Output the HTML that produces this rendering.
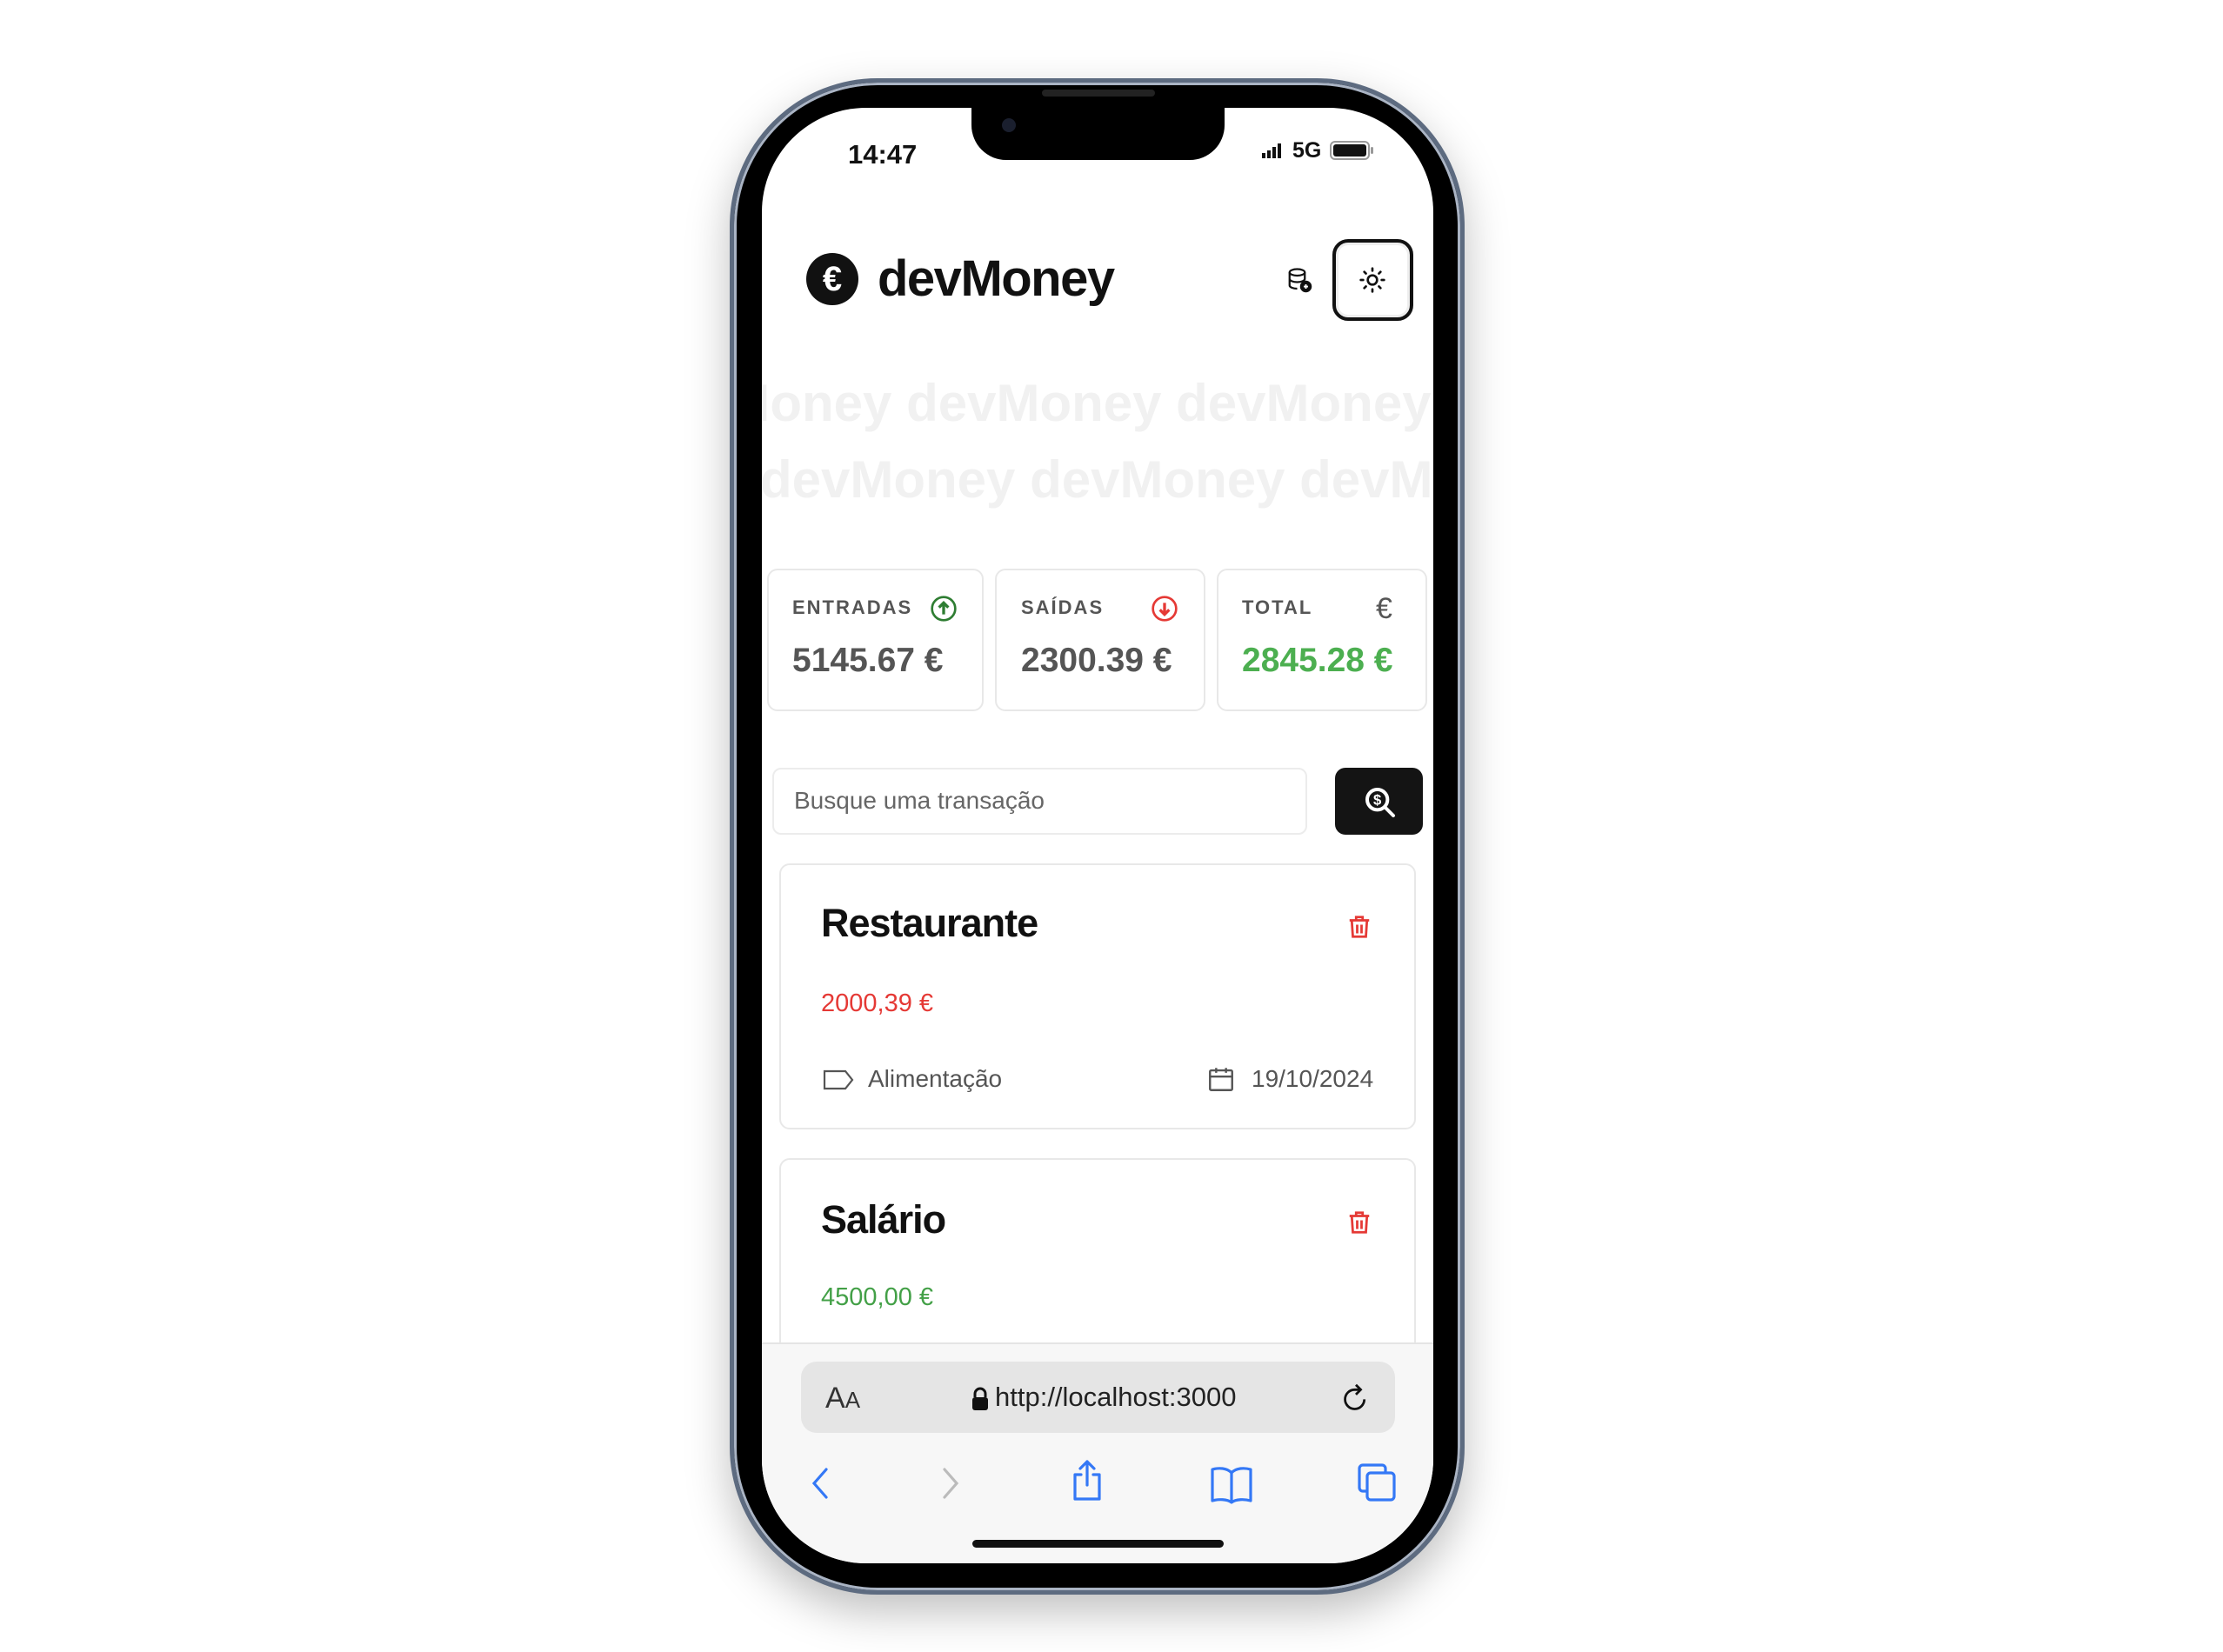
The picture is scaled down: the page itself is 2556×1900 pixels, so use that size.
<!DOCTYPE html>
<html><head><meta charset="utf-8"><style>
*{margin:0;padding:0;box-sizing:border-box}
body{width:2556px;height:1900px;background:#fff;position:relative;overflow:hidden;font-family:"Liberation Sans",sans-serif}
.a{position:absolute}
.phone{left:839px;top:90px;width:845px;height:1744px;border-radius:170px;background:#000;border:5px solid #5d6b80;box-shadow:0 20px 50px rgba(0,0,0,.25),inset 0 0 0 3px #aab4c4}
.screen{left:876px;top:124px;width:772px;height:1674px;border-radius:120px;background:#fff;overflow:hidden}
.notch{left:1117px;top:110px;width:291px;height:74px;background:#000;border-radius:0 0 40px 40px}
.wm{font-weight:bold;font-size:60px;color:#f1f1f1;white-space:nowrap;word-spacing:0px}
.card{border:2px solid #e8e8e8;border-radius:12px;background:#fff}
.lbl{font-weight:bold;font-size:22px;letter-spacing:2px;color:#555}
.val{font-weight:bold;font-size:39px;color:#555}
.t{font-weight:bold;font-size:45px;color:#111;letter-spacing:-1px}
.ft{font-size:28px;color:#555}
</style></head><body>
<div class="a phone"></div>
<div class="a screen">
 <div class="a" style="left:99px;top:36px;font-weight:bold;font-size:31px;color:#111">14:47</div>
 <div class="a" style="left:575px;top:40px;width:26px;height:18px">
  <div class="a" style="left:0;bottom:0;width:4px;height:6px;background:#111"></div>
  <div class="a" style="left:6px;bottom:0;width:4px;height:9px;background:#111"></div>
  <div class="a" style="left:12px;bottom:0;width:4px;height:13px;background:#111"></div>
  <div class="a" style="left:18px;bottom:0;width:4px;height:17px;background:#111"></div>
 </div>
 <div class="a" style="left:610px;top:35px;font-weight:bold;font-size:25px;color:#111">5G</div>
 <div class="a" style="left:653px;top:38px;width:46px;height:22px;border:2px solid #999;border-radius:6px;padding:2px"><div style="width:100%;height:100%;background:#111;border-radius:3px"></div></div>
 <div class="a" style="left:700px;top:45px;width:3px;height:8px;background:#999;border-radius:2px"></div>

 <div class="a" style="left:51px;top:167px;width:60px;height:60px;border-radius:50%;background:#111;color:#fff;font-weight:bold;font-size:40px;text-align:center;line-height:60px">€</div>
 <div class="a" style="left:133px;top:163px;font-weight:bold;font-size:58px;color:#111;letter-spacing:-1.5px">devMoney</div>
 <svg class="a" style="left:603px;top:183px" width="30" height="30" viewBox="0 0 24 24" fill="none" stroke="#111" stroke-width="1.8"><ellipse cx="10" cy="5" rx="7" ry="3"/><path d="M3 5v12c0 1.6 3 3 7 3M3 11c0 1.6 3 3 7 3s7-1.4 7-3V5"/><circle cx="18" cy="18" r="4.5" fill="#111"/><path d="M18 16v4M16 18h4" stroke="#fff" stroke-width="1.5"/></svg>
 <div class="a" style="left:656px;top:151px;width:93px;height:94px;border:4px solid #111;border-radius:18px;box-shadow:inset 0 0 0 3px #eee"></div>
 <svg class="a" style="left:686px;top:182px" width="32" height="32" viewBox="0 0 24 24" fill="none" stroke="#111" stroke-width="2" stroke-linecap="round"><circle cx="12" cy="12" r="4"/><path d="M12 2v2M12 20v2M2 12h2M20 12h2M5 5l1.4 1.4M17.6 17.6L19 19M5 19l1.4-1.4M17.6 6.4L19 5"/></svg>

 <div class="a wm" style="left:-144px;top:305px">devMoney devMoney devMoney devMoney</div>
 <div class="a wm" style="left:-2px;top:393px">devMoney devMoney devMoney</div>

 <div class="a card" style="left:6px;top:530px;width:249px;height:164px"></div>
 <div class="a card" style="left:268px;top:530px;width:242px;height:164px"></div>
 <div class="a card" style="left:523px;top:530px;width:242px;height:164px"></div>
 <div class="a lbl" style="left:35px;top:562px">ENTRADAS</div>
 <div class="a lbl" style="left:298px;top:562px">SAÍDAS</div>
 <div class="a lbl" style="left:552px;top:562px">TOTAL</div>
 <svg class="a" style="left:193px;top:560px" width="32" height="32" viewBox="0 0 24 24" fill="none" stroke="#2e7d32" stroke-width="2"><circle cx="12" cy="12" r="10"/><path d="M12 17V8M8 11l4-4 4 4" stroke-width="2.5"/></svg>
 <svg class="a" style="left:447px;top:560px" width="32" height="32" viewBox="0 0 24 24" fill="none" stroke="#e53935" stroke-width="2"><circle cx="12" cy="12" r="10"/><path d="M12 7v9M8 13l4 4 4-4" stroke-width="2.5"/></svg>
 <div class="a" style="left:706px;top:557px;font-size:34px;color:#555">€</div>
 <div class="a val" style="left:35px;top:614px">5145.67 €</div>
 <div class="a val" style="left:298px;top:614px">2300.39 €</div>
 <div class="a val" style="left:552px;top:614px;color:#4caf50">2845.28 €</div>

 <div class="a" style="left:12px;top:759px;width:615px;height:77px;border:2px solid #ececec;border-radius:10px;font-size:28px;color:#666;padding:20px 0 0 23px">Busque uma transação</div>
 <div class="a" style="left:659px;top:759px;width:101px;height:77px;background:#141414;border-radius:12px"></div>
 <svg class="a" style="left:691px;top:779px" width="40" height="40" viewBox="0 0 24 24" fill="none" stroke="#fff" stroke-width="2.4"><circle cx="10" cy="10" r="7"/><path d="M15 15l6 6" stroke-linecap="round"/><text x="10" y="13.5" font-size="10" font-weight="bold" fill="#fff" stroke="none" text-anchor="middle" font-family="Liberation Sans">$</text></svg>

 <div class="a card" style="left:20px;top:869px;width:732px;height:306px"></div>
 <div class="a t" style="left:68px;top:912px">Restaurante</div>
 <svg class="a" style="left:672px;top:926px" width="30" height="32" viewBox="0 0 24 24" fill="none" stroke="#e53935" stroke-width="2.2"><path d="M3 6h18M9 6V3h6v3M5 6l1 15h12l1-15M10 10v8M14 10v8"/></svg>
 <div class="a" style="left:68px;top:1014px;font-size:29px;color:#e53935">2000,39 €</div>
 <svg class="a" style="left:70px;top:1104px" width="36" height="28" viewBox="0 0 36 28" fill="none" stroke="#555" stroke-width="2.2"><path d="M2 4h24l8 10-8 10H2z"/></svg>
 <div class="a ft" style="left:122px;top:1101px">Alimentação</div>
 <svg class="a" style="left:511px;top:1100px" width="34" height="34" viewBox="0 0 24 24" fill="none" stroke="#555" stroke-width="1.7"><rect x="3" y="5" width="18" height="16" rx="1"/><path d="M3 10h18M8 3v4M16 3v4"/></svg>
 <div class="a ft" style="left:563px;top:1101px">19/10/2024</div>

 <div class="a card" style="left:20px;top:1208px;width:732px;height:400px"></div>
 <div class="a t" style="left:68px;top:1253px">Salário</div>
 <svg class="a" style="left:672px;top:1266px" width="30" height="32" viewBox="0 0 24 24" fill="none" stroke="#e53935" stroke-width="2.2"><path d="M3 6h18M9 6V3h6v3M5 6l1 15h12l1-15M10 10v8M14 10v8"/></svg>
 <div class="a" style="left:68px;top:1352px;font-size:29px;color:#43a047">4500,00 €</div>

 <div class="a" style="left:0;top:1420px;width:772px;height:260px;background:#f7f7f7;border-top:2px solid #e4e4e4"></div>
 <div class="a" style="left:45px;top:1442px;width:683px;height:82px;background:#e5e5e5;border-radius:18px"></div>
 <div class="a" style="left:73px;top:1465px;font-size:34px;color:#333">A<span style="font-size:26px">A</span></div>
 <svg class="a" style="left:240px;top:1471px" width="22" height="28" viewBox="0 0 22 28"><path d="M5 12V8a6 6 0 0112 0v4" fill="none" stroke="#111" stroke-width="3"/><rect x="2" y="12" width="18" height="15" rx="3" fill="#111"/></svg>
 <div class="a" style="left:268px;top:1465px;font-size:31px;color:#222">http://localhost:3000</div>
 <svg class="a" style="left:666px;top:1466px" width="34" height="36" viewBox="0 0 24 26" fill="none" stroke="#111" stroke-width="2"><path d="M19 14a8 8 0 11-8-8h4"/><path d="M12 2l4 4-4 4"/></svg>

 <svg class="a" style="left:52px;top:1562px" width="30" height="40" viewBox="0 0 30 40" fill="none" stroke="#3478f6" stroke-width="3.2" stroke-linecap="round"><path d="M22 4L8 20l14 16"/></svg>
 <svg class="a" style="left:202px;top:1562px" width="30" height="40" viewBox="0 0 30 40" fill="none" stroke="#bbb" stroke-width="3.2" stroke-linecap="round"><path d="M8 4l14 16L8 36"/></svg>
 <svg class="a" style="left:354px;top:1554px" width="40" height="50" viewBox="0 0 40 50" fill="none" stroke="#3478f6" stroke-width="3.2" stroke-linecap="round" stroke-linejoin="round"><path d="M20 30V3M12 11l8-8 8 8M13 18H6v28h28V18h-7"/></svg>
 <svg class="a" style="left:515px;top:1560px" width="50" height="46" viewBox="0 0 50 46" fill="none" stroke="#3478f6" stroke-width="3.2" stroke-linejoin="round"><path d="M25 10C20 4 10 4 3 6v36c7-2 17-2 22 2 5-4 15-4 22-2V6c-7-2-17-2-22 4zM25 10v34"/></svg>
 <svg class="a" style="left:684px;top:1558px" width="46" height="46" viewBox="0 0 46 46" fill="none" stroke="#3478f6" stroke-width="3.2" stroke-linejoin="round"><rect x="3" y="3" width="30" height="30" rx="4"/><rect x="12" y="12" width="31" height="31" rx="4" fill="#f7f7f7"/></svg>
 <div class="a" style="left:242px;top:1647px;width:289px;height:9px;border-radius:5px;background:#111"></div>
</div>
<div class="a notch"></div>
<div class="a" style="left:1152px;top:136px;width:16px;height:16px;border-radius:50%;background:#1a1f2e"></div>
<div class="a" style="left:1198px;top:103px;width:130px;height:8px;border-radius:4px;background:#222"></div>
</body></html>
